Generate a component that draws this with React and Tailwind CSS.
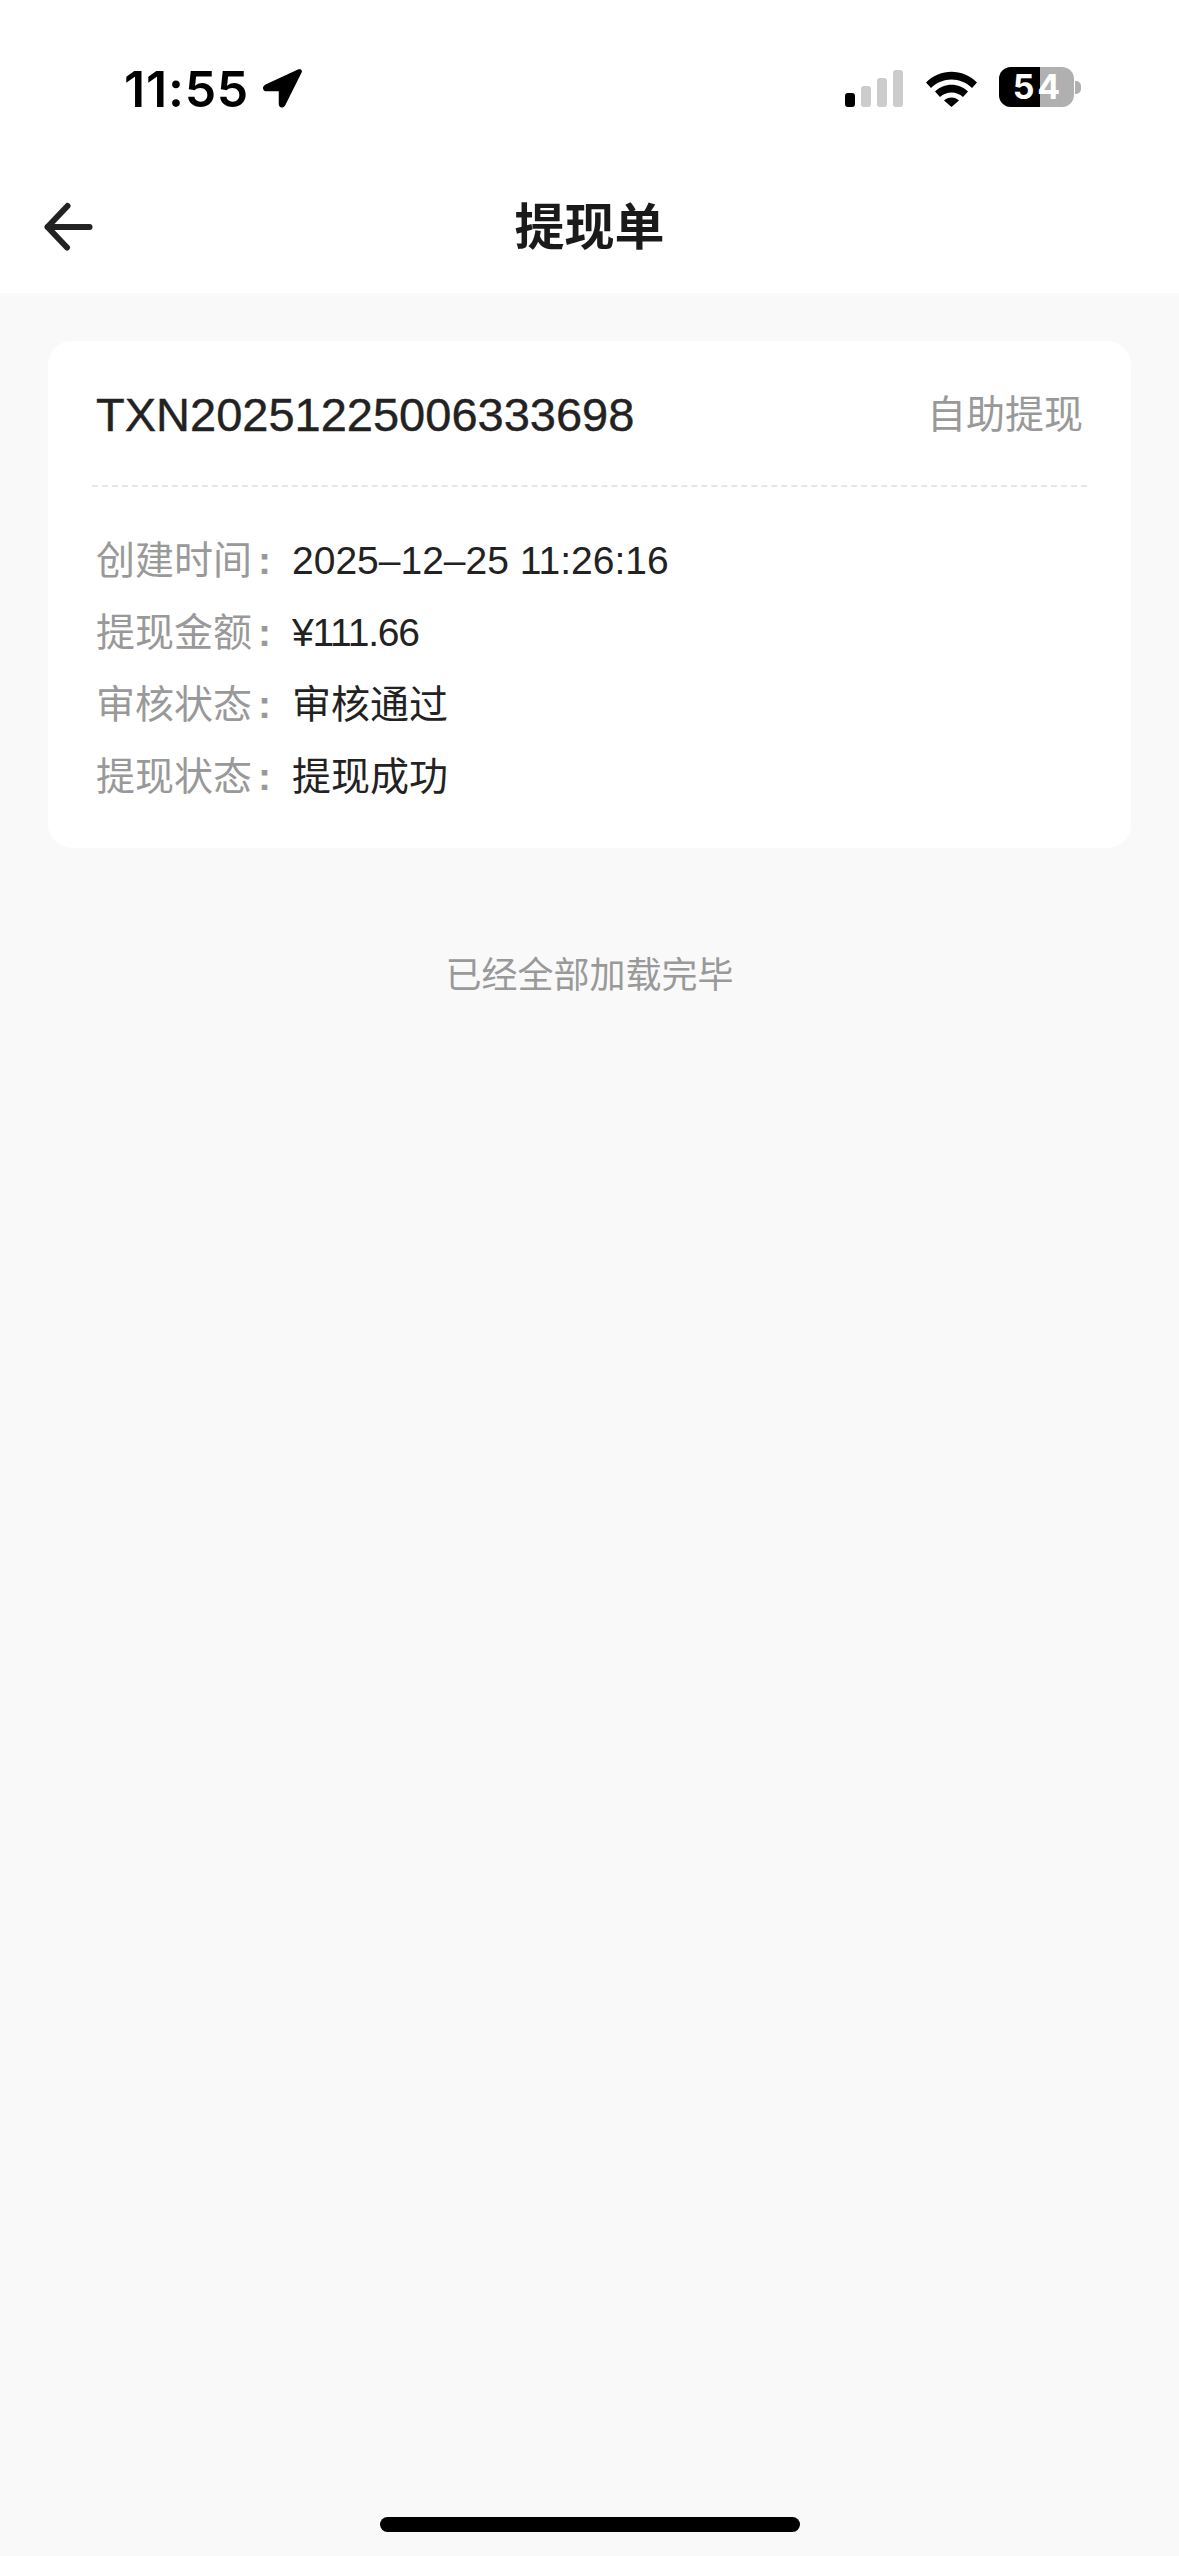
const SANS = "font-['Liberation_Sans','Noto_Sans_CJK_SC',sans-serif]"

const rows = [
  { label: '创建时间', value: '2025–12–25 11:26:16', tight: false },
  { label: '提现金额', value: '¥111.66', tight: true },
  { label: '审核状态', value: '审核通过', tight: false },
  { label: '提现状态', value: '提现成功', tight: false },
]

function StatusBar() {
  return (
    <div className="flex h-[165px] items-start justify-between bg-white pt-[67px] pl-[124px] pr-[98px]">
      <div className="flex items-center gap-[13px]">
        <span className="font-['Inter',sans-serif] text-[50px] leading-[44px] font-semibold tracking-[0.8px] text-black">11:55</span>
        <svg width="40" height="40" viewBox="0 0 40 40" className="mt-[-2px]">
          <path d="M37 2.500 3.500 18c-2 1-1.500 4 1 4H18v14c0 2.500 3 3 4 1L38.500 4c.5-1-.5-2-1.500-1.500Z" fill="#000" stroke="#000" strokeWidth="2.500" strokeLinejoin="round" />
        </svg>
      </div>
      <div className="flex items-center">
        <div className="mt-[2px] flex h-[37px] items-end gap-[6px]">
          <div className="h-[14px] w-[10px] rounded-[3px] bg-black" />
          <div className="h-[21px] w-[10px] rounded-[3px] bg-[#cccccc]" />
          <div className="h-[29px] w-[10px] rounded-[3px] bg-[#cccccc]" />
          <div className="h-[37px] w-[10px] rounded-[3px] bg-[#cccccc]" />
        </div>
        <svg width="51" height="38" viewBox="0 0 51 38" className="mt-[2px] ml-[23px]">
          <path d="M0 13.500C14-1 37-1 51 13.500L46 19C34.500 7.500 16.500 7.500 5 19Z" fill="#000" />
          <path d="M9 22.500C18 13.500 33 13.500 42 22.500L37 28C30.500 22 20.500 22 14 28Z" fill="#000" />
          <path d="M18 31.500C22 27.500 29 27.500 33 31.500L25.500 38Z" fill="#000" />
        </svg>
        <div className="relative ml-[22px] flex h-[40px] w-[75px] items-center justify-center overflow-hidden rounded-[12px] bg-[#b0b0b0]">
          <div className="absolute inset-y-0 left-0 w-[41px] bg-black" />
          <span className="relative ml-[3px] font-['Inter',sans-serif] text-[34px] leading-none font-bold tracking-[3px] text-white">54</span>
        </div>
        <div className="ml-[1px] h-[13px] w-[6px] rounded-r-[5px] bg-[#b0b0b0]" />
      </div>
    </div>
  )
}

function NavBar() {
  return (
    <div className="relative flex h-[128px] items-start justify-center bg-white pt-[38px]">
      <svg width="50" height="50" viewBox="0 0 50 50" className="absolute top-[37px] left-[44px]">
        <path d="M3.500 25H45.500M23.500 4 3.500 25 23 45.500" fill="none" stroke="#222222" strokeWidth="6" strokeLinecap="round" strokeLinejoin="round" />
      </svg>
      <span className={`${SANS} text-[50px] leading-[50px] font-bold text-[#1a1a1a]`}>提现单</span>
    </div>
  )
}

function WithdrawCard() {
  return (
    <div className={`${SANS} rounded-[24px] bg-white px-[48px] pt-[49px] pb-[35px]`}>
      <div className="flex items-center justify-between">
        <span className="text-[47px] leading-[50px] text-[#222222] [-webkit-text-stroke:0.4px_#222222]">TXN20251225006333698</span>
        <span className="text-[39px] leading-[50px] text-[#999999]">自助提现</span>
      </div>
      <div className="mt-[45px] mr-[-4px] ml-[-4px] border-t-2 border-dashed border-[#e6e6e6]" />
      <div className="mt-[38px] flex flex-col">
        {rows.map(row => (
          <div key={row.label} className="flex h-[72px] items-center text-[39px]">
            <span className="w-[196px] shrink-0 text-[#999999]">
              {row.label}<span className="ml-[6px] font-bold">:</span>
            </span>
            <span className={row.tight ? 'tracking-[-1.2px] text-[#222222]' : 'text-[#222222]'}>{row.value}</span>
          </div>
        ))}
      </div>
    </div>
  )
}

export default function App() {
  return (
    <div className="flex min-h-[2556px] flex-col bg-[#f9f9f9]">
      <StatusBar />
      <NavBar />
      <div className="flex grow flex-col px-[48px] pt-[48px]">
        <WithdrawCard />
        <div className={`${SANS} mt-[106px] text-center text-[36px] leading-[44px] text-[#999999]`}>已经全部加载完毕</div>
      </div>
      <div className="flex justify-center pb-[24px]">
        <div className="h-[15px] w-[420px] rounded-full bg-black" />
      </div>
    </div>
  )
}
